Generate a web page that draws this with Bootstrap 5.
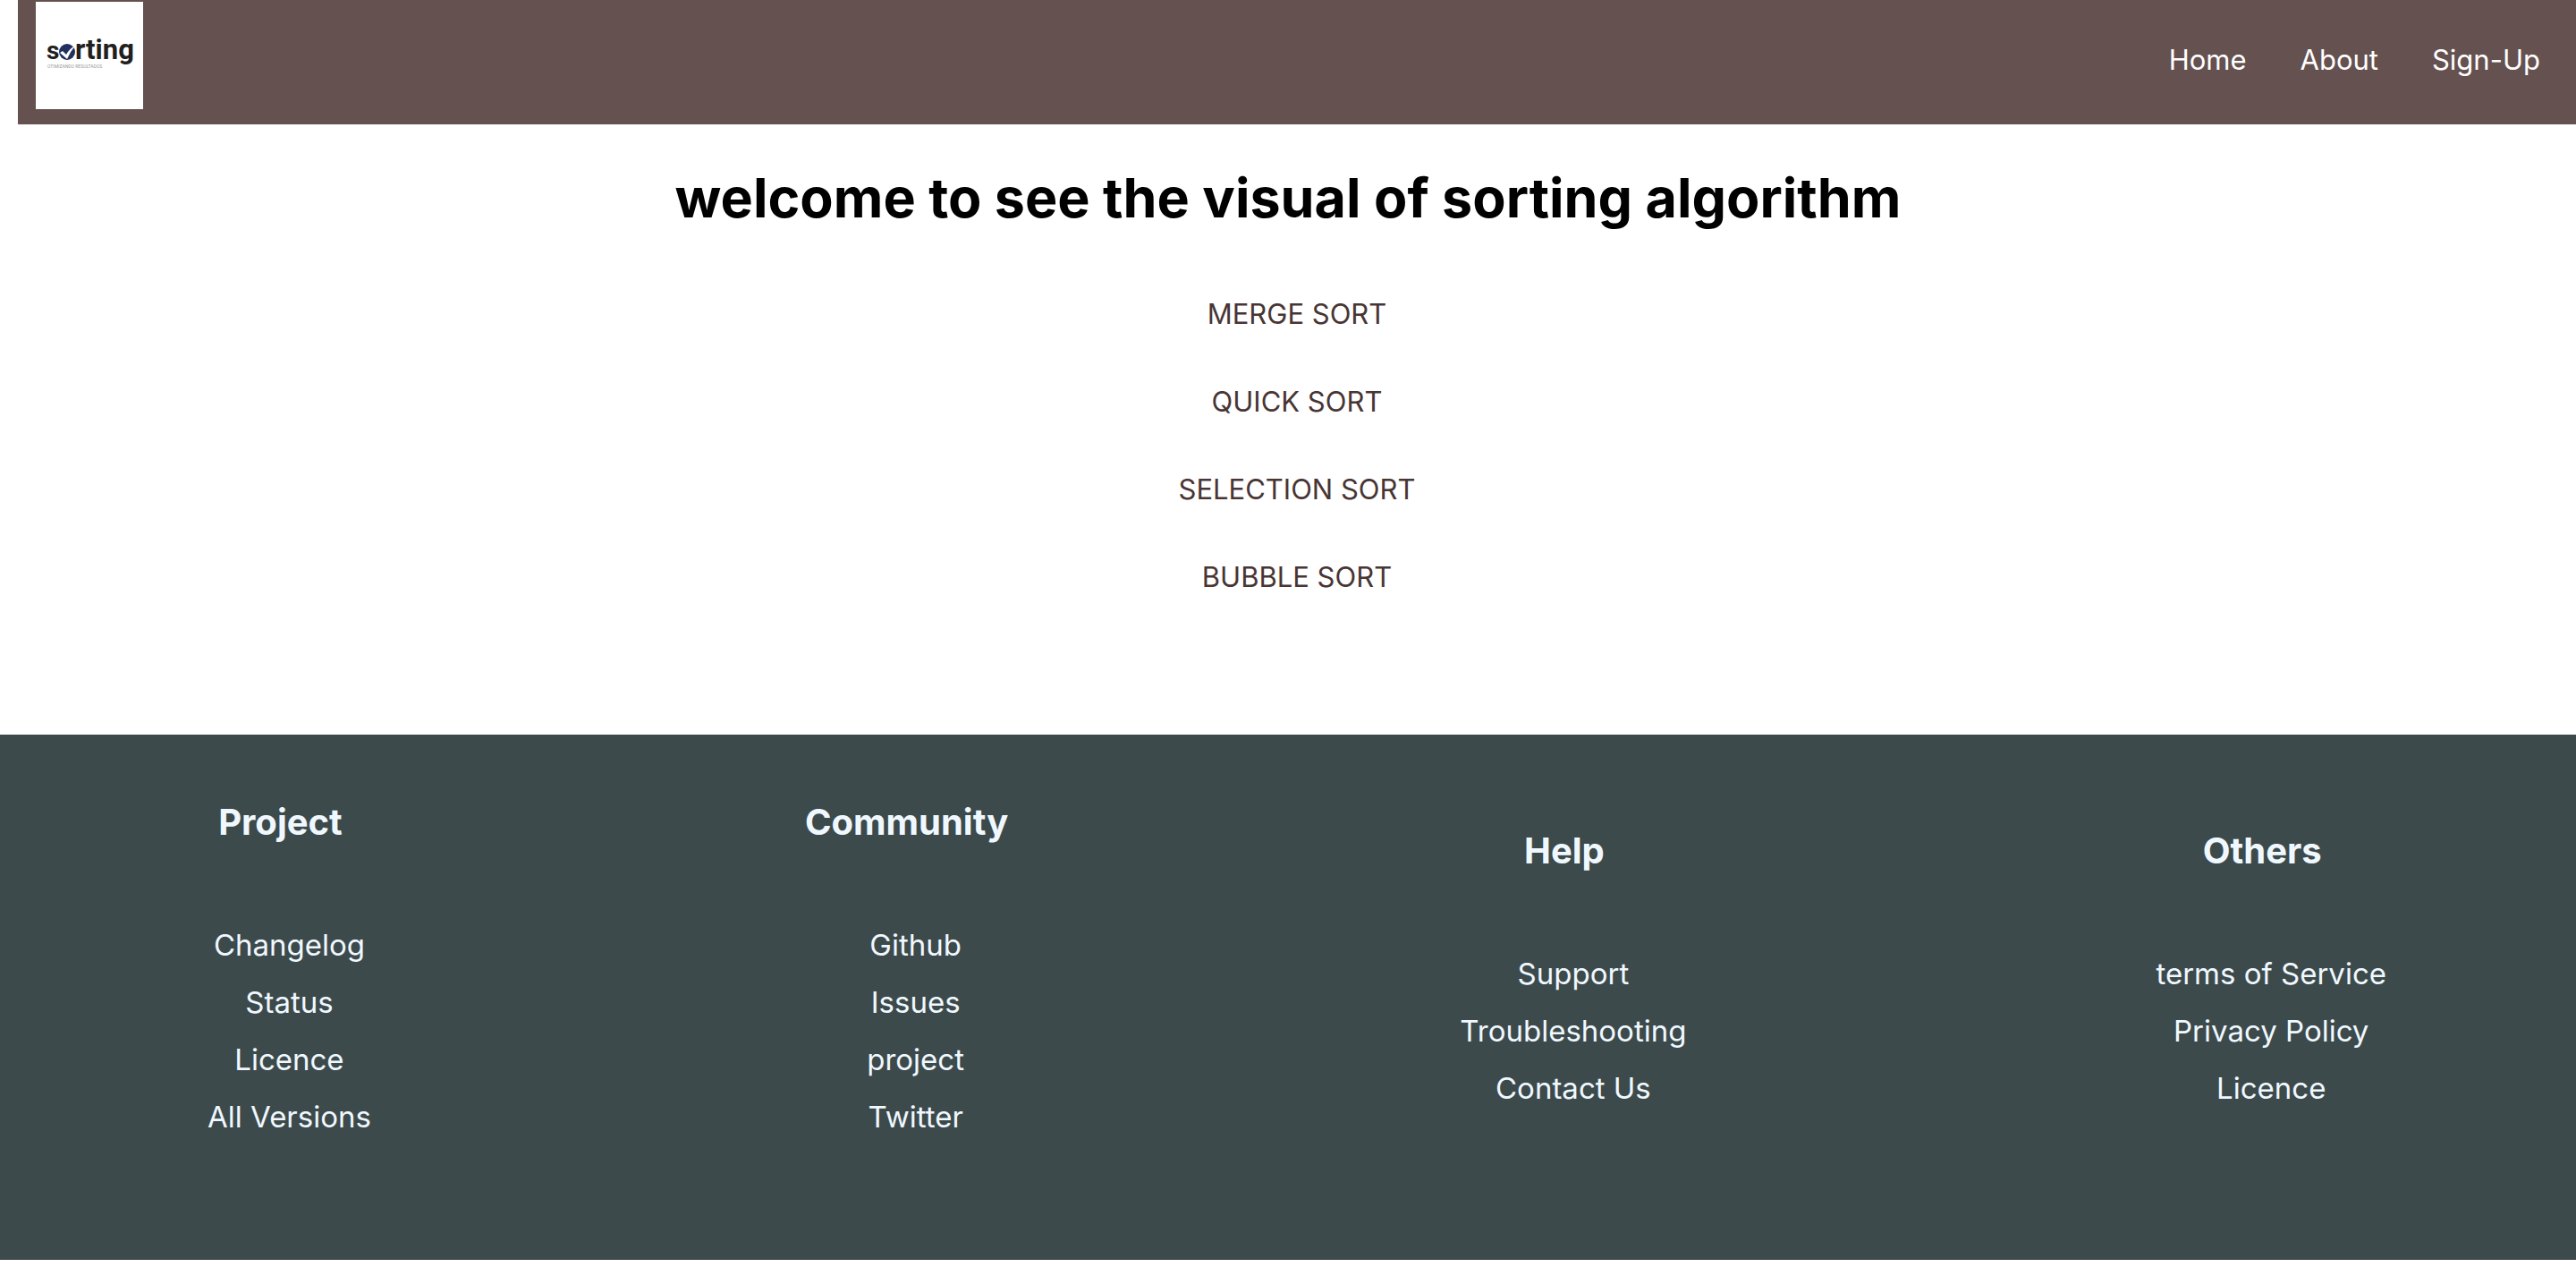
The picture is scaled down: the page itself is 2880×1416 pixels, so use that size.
<!DOCTYPE html>
<html lang="en">
<head>
<meta charset="utf-8">
<meta name="viewport" content="width=device-width, initial-scale=1">
<title>Sorting Visualizer</title>
<link href="https://cdn.jsdelivr.net/npm/bootstrap@5.3.0/dist/css/bootstrap.min.css" rel="stylesheet">
<style>
body { font-family: Inter, "Liberation Sans", sans-serif; font-size: 32px; background: #fff; color: #000; }
a { text-decoration: none; }
.site-bar { background: #65514f; margin-left: 20px; padding: 2px 40px 17px 20px; }
.site-logo { display: block; width: 120px; height: 120px; }
.site-links { gap: 60px; font-size: 31px; line-height: 40px; padding-top: 9px; }
.site-links a { color: #fff; }
.page-title { font-size: 61px; line-height: 76px; font-weight: 700; margin: 44px 0 0; }
.sort-list { padding: 73px 0 0 20px; margin: 0 0 157px; font-size: 31px; line-height: 38px; gap: 60px; }
.sort-list a { color: #483534; }
.site-footer { background: #3d4a4b; color: #f0f8ff; padding: 72px 212px 128px; }
.site-footer a { color: #f0f8ff; }
.foot-title { font-size: 40px; line-height: 52px; font-weight: 700; margin: 0 0 79px; }
.foot-list { padding-left: 20px; margin: 0; font-size: 33px; line-height: 64px; }
.foot-last { margin-left: 20px; }
</style>
<script src="https://cdn.jsdelivr.net/npm/bootstrap@5.3.0/dist/js/bootstrap.bundle.min.js"></script>
</head>
<body>
<header class="site-bar d-flex justify-content-between align-items-center">
  <a href="#" aria-label="Sorting">
    <svg class="site-logo" viewBox="0 0 120 120">
      <rect width="120" height="120" fill="#fff"/>
      <g fill="#231f20" font-family="Roboto, sans-serif" font-weight="700">
        <text x="12" y="64" font-size="28">s</text>
        <text x="44" y="64" font-size="31">rting</text>
      </g>
      <circle cx="35" cy="56" r="9" fill="#22305f"/>
      <path d="M27 57l3-2 4 4q4-7 10-10-5 6-9 15z" fill="#fff"/>
      <text x="13" y="74" fill="#999" font-family="Roboto, sans-serif" font-size="5">OTIMIZANDO RESULTADOS</text>
    </svg>
  </a>
  <nav class="site-links d-flex">
    <a href="#">Home</a>
    <a href="#">About</a>
    <a href="#">Sign-Up</a>
  </nav>
</header>
<main class="text-center">
  <h1 class="page-title">welcome to see the visual of sorting algorithm</h1>
  <ul class="sort-list list-unstyled d-flex flex-column">
    <li><a href="#">MERGE SORT</a></li>
    <li><a href="#">QUICK SORT</a></li>
    <li><a href="#">SELECTION SORT</a></li>
    <li><a href="#">BUBBLE SORT</a></li>
  </ul>
</main>
<footer class="site-footer d-flex justify-content-between align-items-center text-center">
  <section>
    <h2 class="foot-title">Project</h2>
    <ul class="foot-list list-unstyled">
      <li><a href="#">Changelog</a></li>
      <li><a href="#">Status</a></li>
      <li><a href="#">Licence</a></li>
      <li><a href="#">All Versions</a></li>
    </ul>
  </section>
  <section>
    <h2 class="foot-title">Community</h2>
    <ul class="foot-list list-unstyled">
      <li><a href="#">Github</a></li>
      <li><a href="#">Issues</a></li>
      <li><a href="#">project</a></li>
      <li><a href="#">Twitter</a></li>
    </ul>
  </section>
  <section>
    <h2 class="foot-title">Help</h2>
    <ul class="foot-list list-unstyled">
      <li><a href="#">Support</a></li>
      <li><a href="#">Troubleshooting</a></li>
      <li><a href="#">Contact Us</a></li>
    </ul>
  </section>
  <section class="foot-last">
    <h2 class="foot-title">Others</h2>
    <ul class="foot-list list-unstyled">
      <li><a href="#">terms of Service</a></li>
      <li><a href="#">Privacy Policy</a></li>
      <li><a href="#">Licence</a></li>
    </ul>
  </section>
</footer>
</body>
</html>
